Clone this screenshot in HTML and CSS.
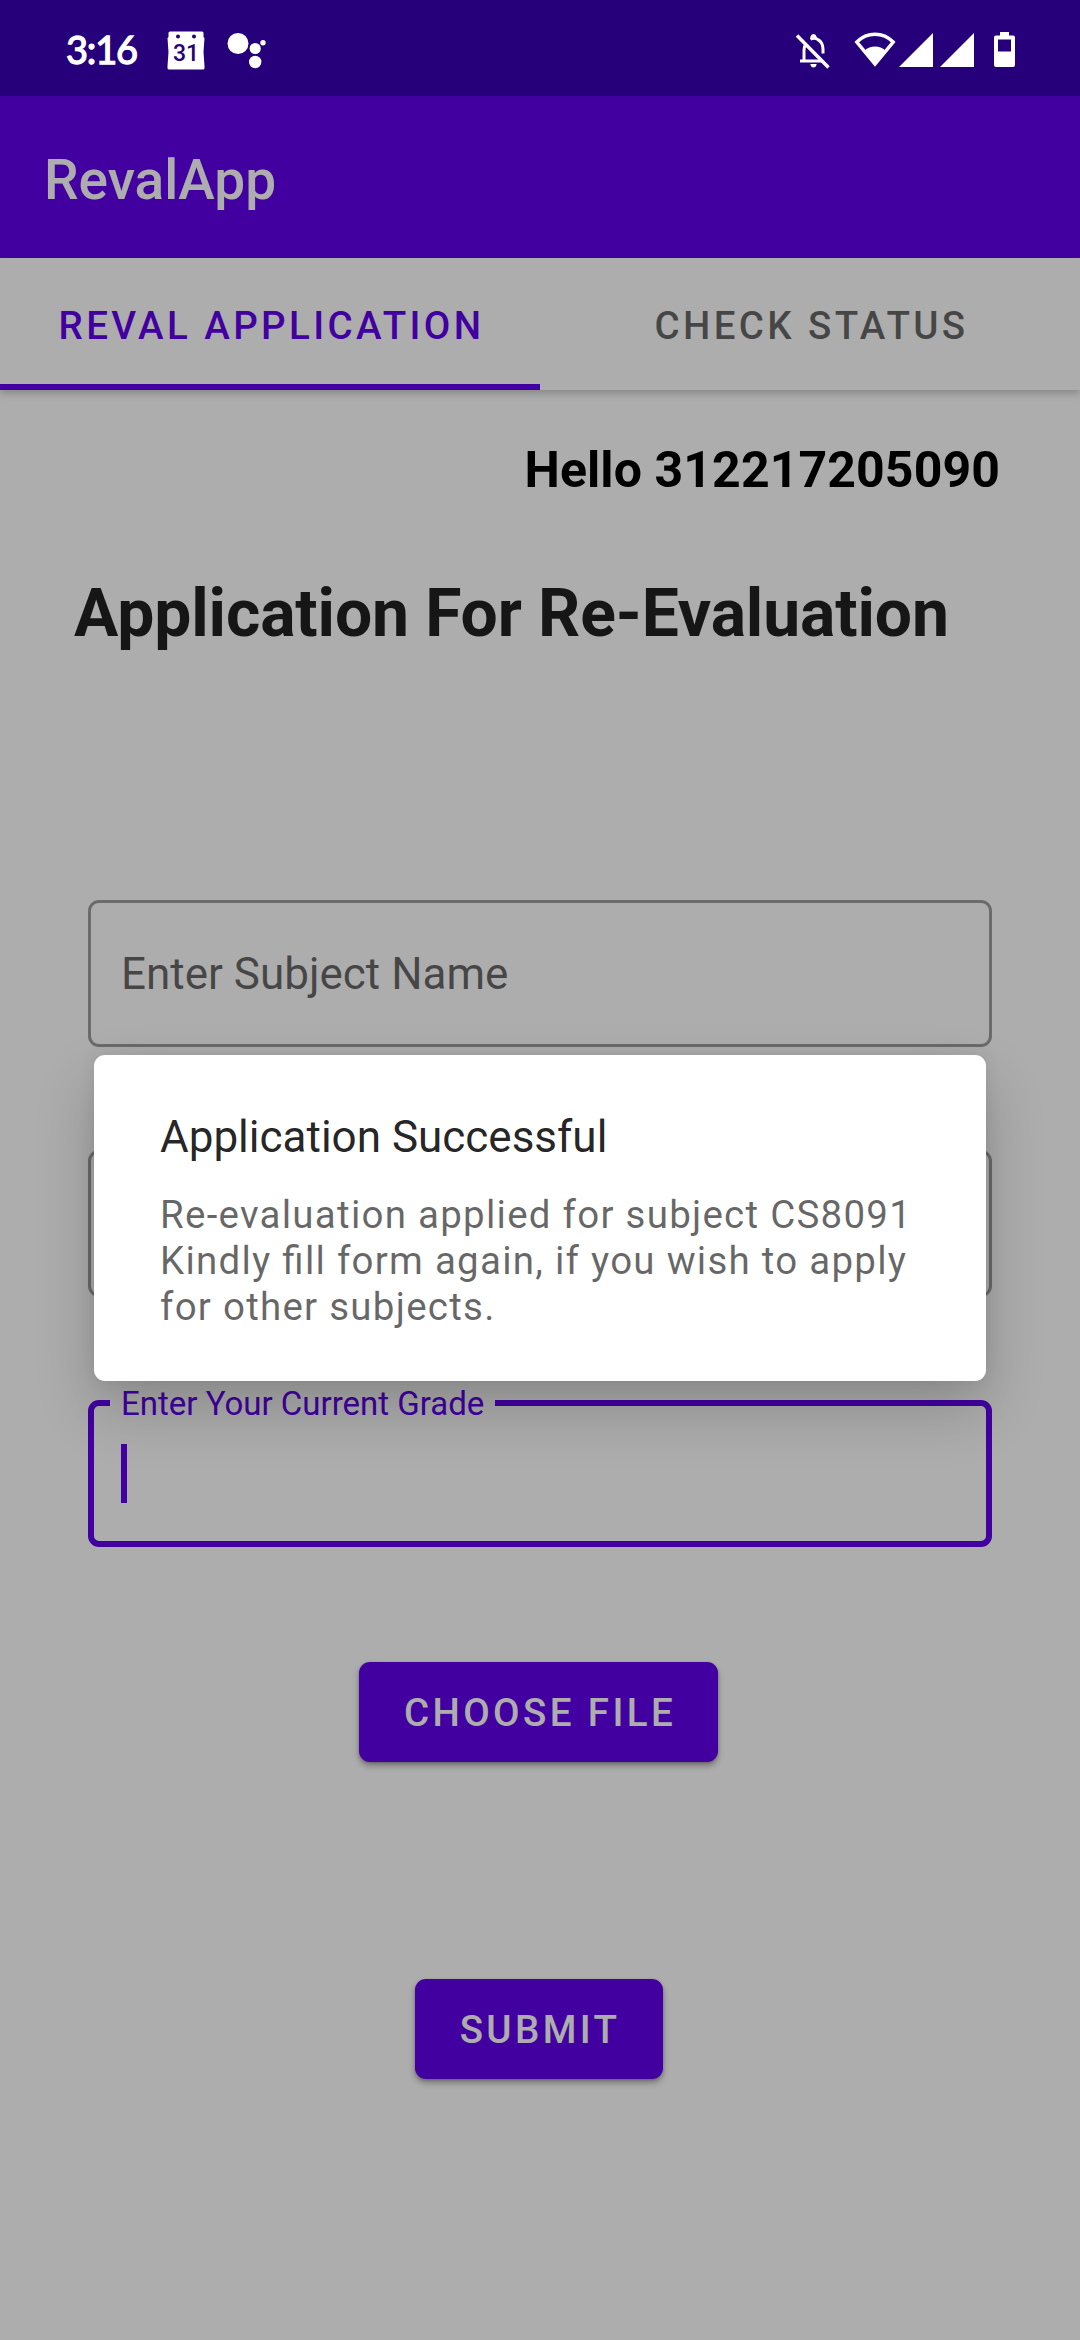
FILE: index.html
```html
<!DOCTYPE html>
<html lang="en">
<head>
<meta charset="utf-8">
<title>RevalApp</title>
<link rel="stylesheet" href="styles.css">
</head>
<body>
<div class="screen">
  <header class="status-bar">
    <div class="status-left">
      <span class="clock">3:16</span>
      <span class="calendar">
        <svg class="calendar-shape" viewBox="0 0 38 39" width="38" height="39"><path fill="#fff" fill-rule="evenodd" d="M3 0.5H35Q36.5 .5 36.5 2V6L37.5 7L36.5 21L37.5 35V37Q37.5 38.5 36 38.5H2Q.5 38.5 .5 37V35L1.500 21L.5 7L1.500 6V2Q1.500 .5 3 .5ZM11 3.500A2 2 0 1 0 11 7.500A2 2 0 1 0 11 3.500ZM27 3.500A2 2 0 1 0 27 7.500A2 2 0 1 0 27 3.500Z"/></svg>
        <span class="calendar-day">31</span>
      </span>
      <svg class="assistant" viewBox="0 0 40 38" width="40" height="38" fill="#fff"><circle cx="11" cy="12.500" r="10.500"/><circle cx="28.200" cy="17.500" r="5.600"/><circle cx="28.200" cy="31" r="6.200"/><circle cx="36" cy="11.700" r="2.700"/></svg>
    </div>
    <div class="status-right">
      <svg class="bell" viewBox="0 0 34 36" width="34" height="36" fill="none" stroke="#fff" stroke-width="3"><path d="M14.500 6.300Q18 4.300 21.500 6.300Q27 9 27 16V20.500M9 12.500Q8 14.500 8 17.500V28M4 28H27"/><path stroke-width="3.400" d="M1 2.500L32.500 34.500"/><path fill="#fff" stroke="none" d="M14.500 6V3.500Q15 1 17.500 1Q20 1 20.500 3.500V6ZM14.300 31H20.700Q20 34.500 17.500 34.500Q15 34.500 14.300 31Z"/></svg>
      <svg class="wifi" viewBox="0 0 42 35" width="42" height="35"><path fill="none" stroke="#fff" stroke-width="3.400" d="M2.800 10Q10.500 2.200 21 2.200Q31.500 2.200 39.200 10L21 32Z"/><path fill="#fff" d="M10.500 18.500Q15 14.500 21 14.500Q27 14.500 31.500 18.500L21 33Z"/></svg>
      <svg class="signal" viewBox="0 0 34 34" width="34" height="34"><path fill="#fff" d="M34 0V34H0Z"/></svg>
      <svg class="signal" viewBox="0 0 34 34" width="34" height="34"><path fill="#fff" d="M34 0V34H0Z"/></svg>
      <svg class="battery" viewBox="0 0 21 35" width="21" height="35"><path fill="#fff" fill-rule="evenodd" d="M6 0H15V3.500H19Q21 3.500 21 5.500V33Q21 35 19 35H2Q0 35 0 33V5.500Q0 3.500 2 3.500H6ZM4 7.500V19.500H17V7.500Z"/></svg>
    </div>
  </header>

  <div class="app-bar"><h1 class="app-title">RevalApp</h1></div>

  <nav class="tabs">
    <div class="tab tab-active">REVAL APPLICATION</div>
    <div class="tab">CHECK STATUS</div>
  </nav>

  <main class="content">
    <p class="greeting">Hello 312217205090</p>
    <h2 class="heading">Application For Re-Evaluation</h2>
    <div class="form">
      <div class="field"><span class="hint">Enter Subject Name</span></div>
      <div class="field"></div>
      <fieldset class="field-focused">
        <legend class="field-label">Enter Your Current Grade</legend>
        <div class="caret"></div>
      </fieldset>
    </div>
    <div class="actions">
      <button class="button choose">CHOOSE FILE</button>
      <button class="button submit">SUBMIT</button>
    </div>
  </main>

  <div class="scrim">
    <section class="dialog">
      <h3 class="dialog-title">Application Successful</h3>
      <p class="dialog-text">Re-evaluation applied for subject CS8091<br>Kindly fill form again, if you wish to apply<br>for other subjects.</p>
    </section>
  </div>
</div>
</body>
</html>
```

FILE: styles.css
```css
* { box-sizing: border-box; margin: 0; padding: 0; }

body { font-family: Roboto, "Liberation Sans", sans-serif; background: #fff; }

.screen {
  position: relative;
  width: 1080px;
  height: 2340px;
  overflow: hidden;
  display: flex;
  flex-direction: column;
  background: #fff;
}

/* The status icons stay bright above the scrim */
.status-bar {
  position: relative;
  z-index: 3;
  height: 96px;
  flex: none;
  display: flex;
  justify-content: space-between;
  padding: 31px 65px 0 66px;
  background: #25007a;
  color: #fff;
}
.status-left, .status-right { display: flex; align-items: flex-start; }
.clock {
  width: 101px;
  font: 400 38px/37px Lato, sans-serif;
  letter-spacing: -1.2px;
  -webkit-text-stroke: 1.3px #fff;
}
.calendar { display: grid; width: 38px; height: 39px; }
.calendar-shape, .calendar-day { grid-area: 1 / 1; }
.calendar-day {
  color: #25007a;
  font-size: 23px;
  font-weight: 500;
  line-height: 46px;
  text-align: center;
}
.assistant { margin-left: 22px; }
.bell { margin: 2px 24px 0 0; }
.wifi { margin: 1px 3px 0 0; }
.signal { margin: 2px 7px 0 0; }
.battery { margin: 1px 0 0 13px; }

.app-bar {
  height: 162px;
  flex: none;
  display: flex;
  align-items: center;
  padding: 6px 44px 0;
  background: #6200ee;
}
.app-title { color: #fff; font-size: 55px; font-weight: 500; line-height: 64px; }

.tabs {
  position: relative;
  height: 132px;
  flex: none;
  display: flex;
  background: #fff;
  box-shadow: 0 3px 8px rgba(0, 0, 0, .24);
}
.tab {
  flex: 1;
  display: flex;
  align-items: center;
  justify-content: center;
  font-size: 38.5px;
  font-weight: 500;
  letter-spacing: 3.4px;
  color: rgba(0, 0, 0, .6);
  border-bottom: 6px solid transparent;
  padding: 8px 0 0 3px;
}
.tab-active { color: #6200ee; border-bottom-color: #6200ee; }

.content { flex: 1; padding: 51px 75px 0; }
.greeting {
  padding-right: 5px;
  text-align: right;
  color: #000;
  font-size: 50px;
  font-weight: 700;
  line-height: 58px;
  letter-spacing: .1px;
}
.heading {
  margin: 76px 0 0 -1px;
  color: rgba(0, 0, 0, .87);
  font-size: 66px;
  font-weight: 700;
  line-height: 78px;
  letter-spacing: -.12px;
  white-space: nowrap;
}
.form {
  margin: 247px 13px 0;
  display: flex;
  flex-direction: column;
  gap: 103px;
}
.field {
  height: 147px;
  display: flex;
  align-items: center;
  padding: 0 30px;
  border: 3px solid rgba(0, 0, 0, .38);
  border-radius: 11px;
}
.hint { color: rgba(0, 0, 0, .6); font-size: 44px; line-height: 52px; }
.field-focused {
  height: 166px;
  margin-top: -19px;
  padding-left: 16px;
  border: 6px solid #6200ee;
  border-radius: 11px;
}
.field-label {
  padding: 2px 11px 0;
  color: #6200ee;
  font-size: 33px;
  line-height: 42px;
}
.caret { width: 6px; height: 59px; margin: 19px 0 0 11px; background: #6200ee; }

.actions {
  display: flex;
  flex-direction: column;
  align-items: center;
  gap: 217px;
  padding: 115px 3px 0 0;
}
.button {
  height: 100px;
  padding: 2px 0 0 3px;
  border: 0;
  border-radius: 11px;
  background: #6200ee;
  color: #fff;
  font: 500 38.5px/46px Roboto, sans-serif;
  letter-spacing: 3.4px;
  box-shadow: 0 4px 6px rgba(0, 0, 0, .3), 0 1px 3px rgba(0, 0, 0, .2);
}
.choose { width: 359px; }
.submit { width: 248px; }

.scrim {
  position: absolute;
  inset: 0;
  z-index: 2;
  display: flex;
  justify-content: center;
  align-items: flex-start;
  padding-top: 1055px;
  background: rgba(0, 0, 0, .32);
}
.dialog {
  width: 892px;
  height: 326px;
  padding: 56px 66px 0;
  border-radius: 11px;
  background: #fff;
  box-shadow: 0 28px 60px rgba(0, 0, 0, .2), 0 0 16px rgba(0, 0, 0, .08);
}
.dialog-title {
  color: rgba(0, 0, 0, .87);
  font-size: 44px;
  font-weight: 400;
  line-height: 52px;
}
.dialog-text {
  margin-top: 29px;
  color: rgba(0, 0, 0, .6);
  font-size: 38.5px;
  line-height: 46px;
  letter-spacing: 1.25px;
  font-feature-settings: "liga" 1;
  white-space: nowrap;
}
```
